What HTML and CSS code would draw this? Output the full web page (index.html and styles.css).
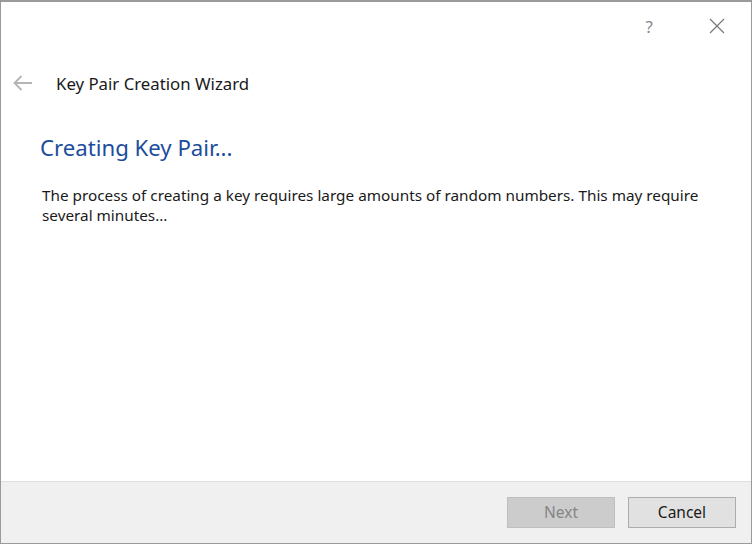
FILE: index.html
```html
<!DOCTYPE html>
<html>
<head>
<meta charset="utf-8">
<link rel="stylesheet" href="styles.css">
</head>
<body>
<div class="window">
  <div class="titlebar">
    <span class="help">?</span>
    <span class="close">
      <svg width="16" height="16" viewBox="0 0 16 16"><path d="M1 1 L15 15 M15 1 L1 15" stroke="#777" stroke-width="1.2" fill="none"/></svg>
    </span>
  </div>
  <div class="header">
    <span class="back">
      <svg width="20" height="16" viewBox="0 0 20 16"><path d="M1.5 8 H19 M8.5 1 L1.5 8 L8.5 15" stroke="#b4b4b4" stroke-width="1.8" fill="none"/></svg>
    </span>
    <span class="wiz-title">Key Pair Creation Wizard</span>
  </div>
  <div class="content">
    <h1 class="heading">Creating Key Pair...</h1>
    <p class="desc">The process of creating a key requires large amounts of random numbers. This may require several minutes…</p>
  </div>
  <div class="footer">
    <button class="btn btn-disabled" disabled>Next</button>
    <button class="btn">Cancel</button>
  </div>
</div>
</body>
</html>
```

FILE: styles.css
```css
html, body {
  margin: 0;
  padding: 0;
  background: #ffffff;
}
body {
  font-family: "Noto Sans", "Open Sans", sans-serif;
  width: 754px;
  height: 546px;
}
.window {
  box-sizing: border-box;
  width: 752px;
  height: 544px;
  border: 1px solid #9a9a9a;
  border-top: 2px solid #9a9a9a;
  display: flex;
  flex-direction: column;
  background: #fff;
}
.titlebar {
  height: 50px;
  display: flex;
  justify-content: flex-end;
  align-items: center;
  padding-right: 26px;
  gap: 56px;
  flex-shrink: 0;
}
.help {
  color: #8a8a8a;
  font-size: 17px;
  font-family: "Noto Sans", sans-serif;
  margin-top: -2px;
}
.close {
  display: flex;
  margin-top: -2px;
}
.header {
  display: flex;
  align-items: center;
  height: 30px;
  padding-left: 12px;
  margin-top: 16px;
  flex-shrink: 0;
}
.back {
  display: flex;
  width: 43px;
}
.wiz-title {
  font-size: 16.8px;
  color: #1a1a1a;
  letter-spacing: 0;
}
.content {
  flex: 1;
  padding: 35px 40px 0 39px;
}
.heading {
  margin: 0;
  font-weight: normal;
  font-size: 22.2px;
  color: #1c4d9c;
  letter-spacing: 0;
  line-height: 30px;
}
.desc {
  margin: 22px 0 0 2px;
  font-size: 15.3px;
  line-height: 20px;
  color: #1a1a1a;
  letter-spacing: 0;
}
.footer {
  height: 62px;
  box-sizing: border-box;
  border-top: 1px solid #dfdfdf;
  background: #f0f0f0;
  display: flex;
  justify-content: flex-end;
  align-items: center;
  gap: 13px;
  padding: 0 15px 1px 0;
  flex-shrink: 0;
}
.btn {
  width: 108px;
  height: 31px;
  box-sizing: border-box;
  border: 1px solid #adadad;
  background: #e1e1e1;
  font-family: "Noto Sans", sans-serif;
  font-size: 15.5px;
  color: #1a1a1a;
  padding: 0;
}
.btn-disabled {
  background: #cccccc;
  border-color: #bfbfbf;
  color: #858585;
}
```
